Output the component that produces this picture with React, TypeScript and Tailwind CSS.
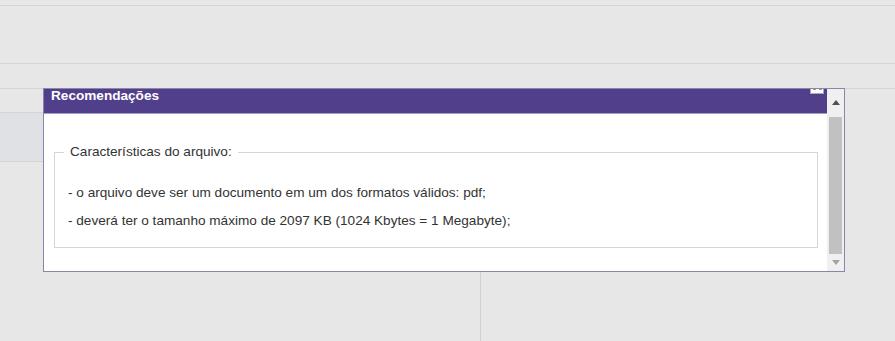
import React from "react";

export default function App() {
  return (
    <div
      className="relative w-[895px] h-[341px] overflow-hidden bg-[#e7e7e7]"
      style={{ fontFamily: '"Liberation Sans", Arial, sans-serif' }}
    >
      {/* background page */}
      <div className="flex flex-col h-full">
        <div className="h-[6px] border-b border-[#d4d4d4]" />
        <div className="h-[58px] border-b border-[#d4d4d4]" />
        <div className="h-[25px] border-b border-[#d4d4d4]" />
        <div className="flex flex-1">
          <div className="w-[481px] border-r border-[#d0d0d0] flex flex-col">
            <div className="h-[24px] border-b border-[#d4d4d4]" />
            <div className="h-[49px] bg-[#dfe1e5] border-b border-[#d4d4d4]" />
          </div>
          <div className="flex-1" />
        </div>
      </div>

      {/* dialog */}
      <div className="absolute left-[43px] top-[88px] w-[802px] h-[184px] border border-[#8a86aa] bg-white flex">
        <div className="flex-1 flex flex-col relative">
          <div className="h-[25px] bg-[#523f8b] border-b border-[#a29ec6] pl-[7px]">
            <span className="block text-white font-bold text-[13.6px] leading-[14px]">
              Recomendações
            </span>
          </div>
          {/* close icon, partially hidden */}
          <div className="absolute left-[766px] top-0 w-[14px] h-[5px] bg-white border border-t-0 border-[#a8a8b8] flex items-start justify-center gap-[3px]">
            <div className="w-[3px] h-[2px] border-t border-[#9a9aa8]" />
            <div className="w-[3px] h-[2px] border-t border-[#9a9aa8]" />
          </div>
          <div className="pt-[30px] pl-[10px] pr-[9px]">
            <fieldset className="border border-[#d8d4d8] pl-[9px] pr-[10px] pb-[12px] text-[#333333] text-[13.6px]">
              <legend className="px-[6px] leading-[16px]">Características do arquivo:</legend>
              <div className="pt-[19px] pl-[4px] leading-[28px]">
                <div>- o arquivo deve ser um documento em um dos formatos válidos: pdf;</div>
                <div>- deverá ter o tamanho máximo de 2097 KB (1024 Kbytes = 1 Megabyte);</div>
              </div>
            </fieldset>
          </div>
        </div>
        {/* scrollbar */}
        <div className="w-[17px] bg-[#f0f0f0] flex flex-col items-center">
          <div className="h-[28px] flex items-center justify-center pb-[1px]">
            <svg width="8" height="5" viewBox="0 0 8 5">
              <polygon points="4,0 8,5 0,5" fill="#505050" />
            </svg>
          </div>
          <div className="w-[13px] h-[137px] bg-[#c1c1c1]" />
          <div className="flex-1 flex items-center justify-center">
            <svg width="8" height="5" viewBox="0 0 8 5">
              <polygon points="0,0 8,0 4,5" fill="#a3a3a3" />
            </svg>
          </div>
        </div>
      </div>
    </div>
  );
}
